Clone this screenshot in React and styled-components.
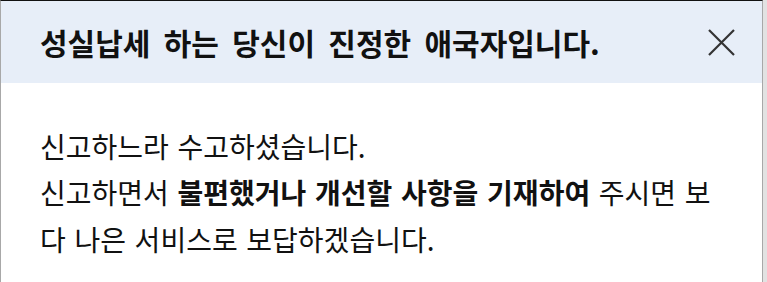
import React from "react";
import styled, { createGlobalStyle } from "styled-components";

const GlobalStyle = createGlobalStyle`
  html, body {
    margin: 0;
    padding: 0;
    background: #e2e2e2;
    font-family: "Noto Sans CJK KR", "Noto Sans", sans-serif;
  }
`;

const Page = styled.div`
  width: 767px;
  height: 282px;
  overflow: hidden;
  display: flex;
  align-items: flex-start;
`;

const Modal = styled.section`
  width: 761px;
  height: 300px;
  background: #fff;
  border-top: 1px solid #111;
  border-left: 1px solid #a8a8a8;
  border-right: 1px solid #a8a8a8;
  color: #111;
`;

const Header = styled.header`
  height: 82px;
  display: flex;
  align-items: center;
  justify-content: space-between;
  padding: 0 26px 0 39px;
  background: #e7eef8;
`;

const Title = styled.h2`
  margin: 0;
  font-size: 30px;
  font-weight: 700;
  word-spacing: 6.5px;
  color: #111;
`;

const CloseButton = styled.button`
  width: 30px;
  height: 30px;
  padding: 0;
  border: 0;
  background: transparent;
  display: flex;
  align-items: center;
  justify-content: center;
  cursor: pointer;
`;

const Content = styled.div`
  padding: 40px 38px 0 39px;
`;

const Message = styled.p`
  margin: 0;
  font-size: 28px;
  line-height: 46.3px;
  word-spacing: 2.4px;
  color: #111;

  strong {
    font-weight: 700;
  }
`;

const CloseIcon = () => (
  <svg width="27" height="27" viewBox="0 0 27 27">
    <path d="M1 1 L26 26 M26 1 L1 26" stroke="#333" strokeWidth="2.2" fill="none" />
  </svg>
);

export default function App() {
  return (
    <>
      <GlobalStyle />
      <Page>
        <Modal>
          <Header>
            <Title>성실납세 하는 당신이 진정한 애국자입니다.</Title>
            <CloseButton type="button" aria-label="닫기">
              <CloseIcon />
            </CloseButton>
          </Header>
          <Content>
            <Message>
              신고하느라 수고하셨습니다.
              <br />
              신고하면서 <strong>불편했거나 개선할 사항을 기재하여</strong> 주시면 보다 나은
              서비스로 보답하겠습니다.
            </Message>
          </Content>
        </Modal>
      </Page>
    </>
  );
}
